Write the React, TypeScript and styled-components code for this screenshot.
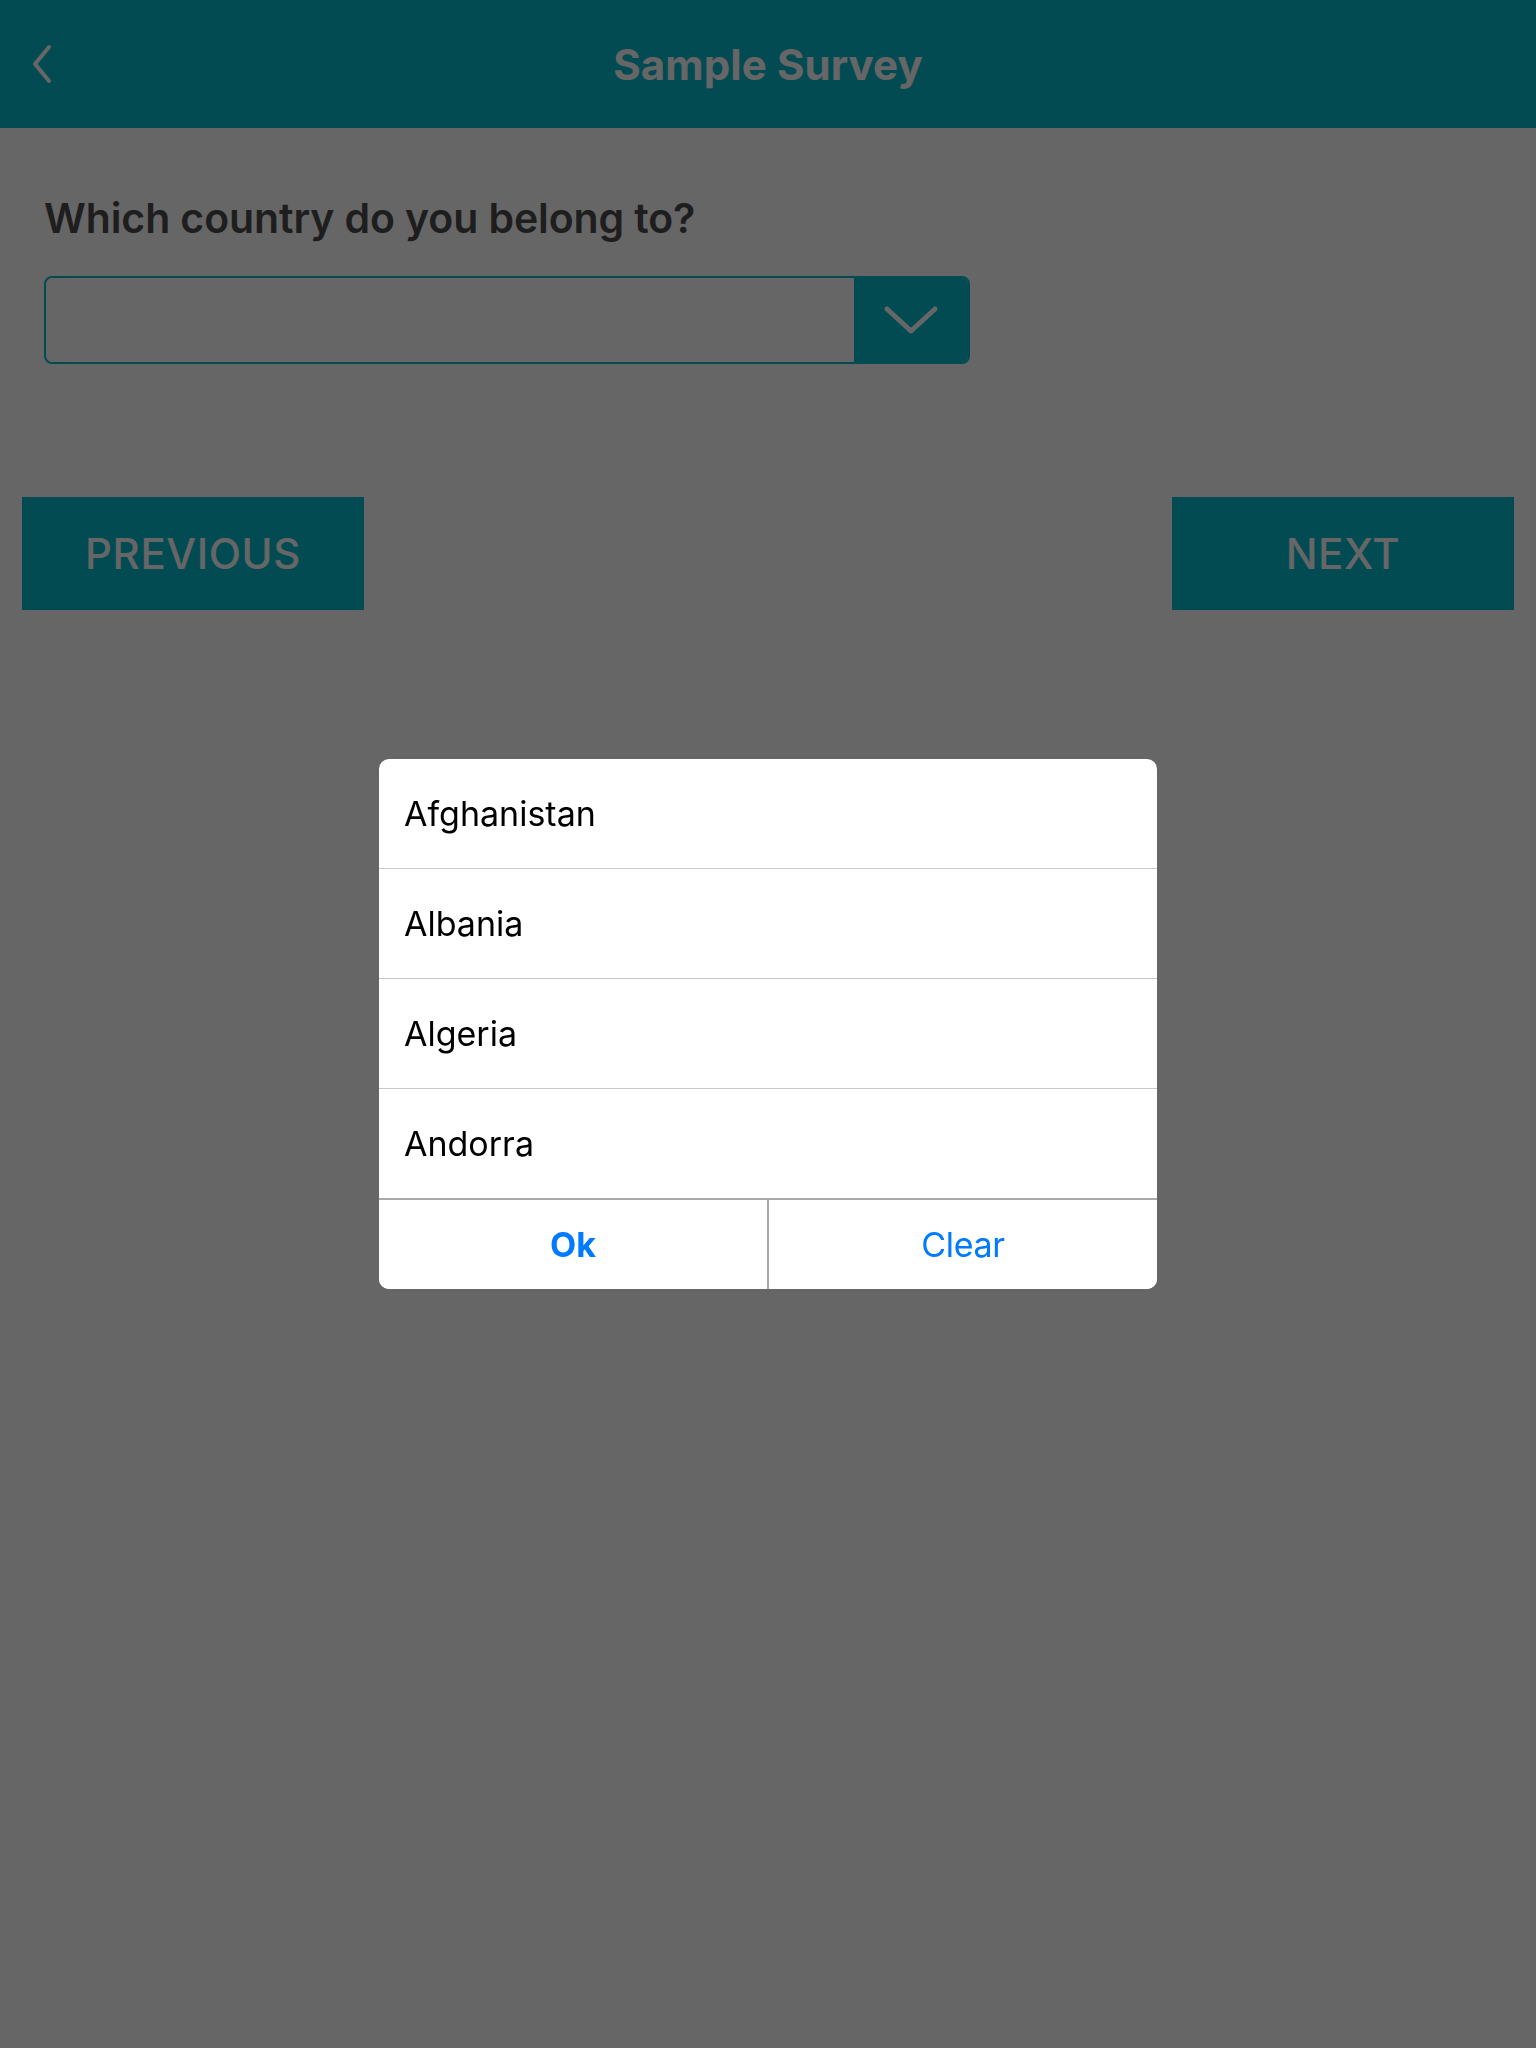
import styled, { createGlobalStyle } from "styled-components";

const GlobalStyle = createGlobalStyle`
  html, body {
    margin: 0;
    padding: 0;
    background: #ffffff;
    font-family: Inter, "Noto Sans", Roboto, sans-serif;
  }
`;

const teal = "#08bccf";

const Page = styled.div`
  min-height: 100vh;
  display: flex;
  flex-direction: column;
`;

const Header = styled.header`
  height: 128px;
  background: ${teal};
  display: grid;
  grid-template-columns: 1fr auto 1fr;
  align-items: center;
`;

const BackButton = styled.button`
  justify-self: start;
  margin-left: 29px;
  padding: 0;
  border: 0;
  background: none;
  display: flex;
  color: #ffffff;
`;

const Title = styled.h1`
  margin: 0;
  font-size: 42px;
  font-weight: 700;
  color: #ffffff;
  letter-spacing: 0.1px;
`;

const Content = styled.main`
  padding: 65px 44px 0;
  display: flex;
  flex-direction: column;
`;

const Question = styled.h2`
  margin: 0;
  font-size: 41px;
  line-height: 50px;
  font-weight: 600;
  color: #4d4d4d;
  letter-spacing: -0.1px;
`;

const Select = styled.div`
  margin-top: 33px;
  width: 926px;
  height: 88px;
  box-sizing: border-box;
  border: 2px solid ${teal};
  border-radius: 8px;
  display: flex;
  overflow: hidden;
`;

const SelectValue = styled.div`
  flex: 1;
`;

const SelectToggle = styled.div`
  width: 114px;
  background: ${teal};
  display: flex;
  align-items: center;
  justify-content: center;
`;

const NavRow = styled.div`
  margin-top: 133px;
  padding: 0 22px;
  display: flex;
  justify-content: space-between;
`;

const NavButton = styled.button`
  width: 342px;
  height: 113px;
  border: 0;
  background: ${teal};
  color: #ffffff;
  font-family: inherit;
  font-size: 42px;
  font-weight: 500;
  letter-spacing: 0.6px;
`;

const Overlay = styled.div`
  position: fixed;
  inset: 0;
  background: rgba(0, 0, 0, 0.6);
  display: flex;
  align-items: center;
  justify-content: center;
`;

const Dialog = styled.div`
  width: 778px;
  background: #ffffff;
  border-radius: 10px;
  overflow: hidden;
  display: flex;
  flex-direction: column;
`;

const Option = styled.div<{ $last?: boolean }>`
  height: 109px;
  padding-left: 25px;
  display: flex;
  align-items: center;
  font-size: 34px;
  color: #000000;
  border-bottom: ${(p) => (p.$last ? "none" : "1px solid #c8c7cc")};
`;

const Actions = styled.div`
  height: 89px;
  border-top: 2px solid #a9a9a9;
  display: flex;
`;

const ActionButton = styled.button<{ $bold?: boolean; $divider?: boolean }>`
  flex: 1;
  border: 0;
  border-left: ${(p) => (p.$divider ? "2px solid #a9a9a9" : "none")};
  background: #ffffff;
  color: #007aff;
  font-family: inherit;
  font-size: 34px;
  font-weight: ${(p) => (p.$bold ? 700 : 400)};
  letter-spacing: ${(p) => (p.$bold ? "0" : "-0.3px")};
`;

const countries = ["Afghanistan", "Albania", "Algeria", "Andorra"];

export default function App() {
  return (
    <Page>
      <GlobalStyle />
      <Header>
        <BackButton aria-label="Back">
          <svg width="26" height="42" viewBox="0 0 26 42" fill="none">
            <path
              d="M20 4 L6 21 L20 38"
              stroke="currentColor"
              strokeWidth="4"
              strokeLinecap="round"
              strokeLinejoin="round"
            />
          </svg>
        </BackButton>
        <Title>Sample Survey</Title>
        <span />
      </Header>
      <Content>
        <Question>Which country do you belong to?</Question>
        <Select>
          <SelectValue />
          <SelectToggle>
            <svg width="56" height="30" viewBox="0 0 56 30" fill="none">
              <path
                d="M4 4 L28 26 L52 4"
                stroke="#ffffff"
                strokeWidth="5"
                strokeLinecap="round"
                strokeLinejoin="round"
              />
            </svg>
          </SelectToggle>
        </Select>
      </Content>
      <NavRow>
        <NavButton>PREVIOUS</NavButton>
        <NavButton>NEXT</NavButton>
      </NavRow>
      <Overlay>
        <Dialog>
          {countries.map((c, i) => (
            <Option key={c} $last={i === countries.length - 1}>
              {c}
            </Option>
          ))}
          <Actions>
            <ActionButton $bold>Ok</ActionButton>
            <ActionButton $divider>Clear</ActionButton>
          </Actions>
        </Dialog>
      </Overlay>
    </Page>
  );
}
